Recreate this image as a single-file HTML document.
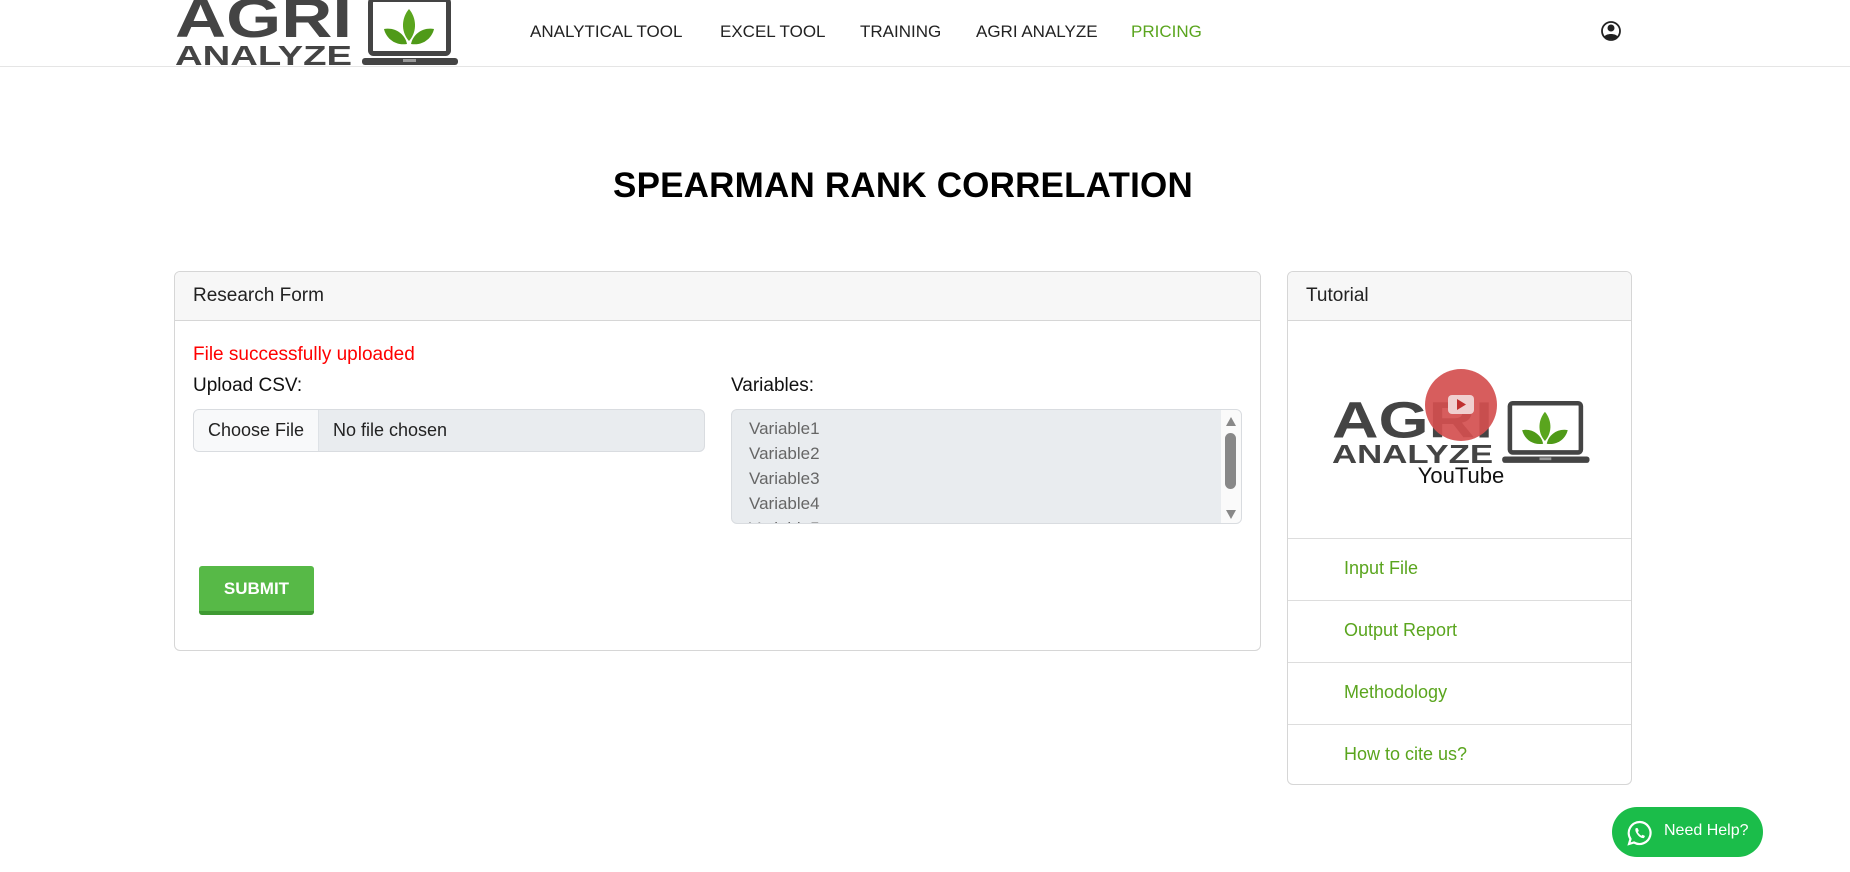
<!DOCTYPE html>
<html><head><meta charset="utf-8">
<style>
*{box-sizing:border-box;margin:0;padding:0}
body{width:1850px;height:872px;overflow:hidden;background:#fff;font-family:"Liberation Sans",sans-serif;color:#212529;position:relative}
.abs{position:absolute}
.hdr{position:absolute;left:0;top:0;width:1850px;height:67px;border-bottom:1px solid #e5e5e5}
.nav{position:absolute;top:22px;font-size:17px;color:#222;white-space:nowrap}
h1{position:absolute;left:0;width:1806px;text-align:center;top:166px;font-size:35px;font-weight:bold;color:#000;letter-spacing:0.2px}
.card{position:absolute;border:1px solid #d6d6d6;border-radius:6px;background:#fff;overflow:hidden}
.ch{height:49px;background:#f7f7f7;border-bottom:1px solid #d6d6d6;font-size:19px;padding:13px 0 0 18px;color:#222}
.lnk{position:absolute;left:0;width:100%;height:62px;border-top:1px solid #ddd;color:#5aa51e;font-size:18px;padding:19px 0 0 56px}
</style></head><body>
<div class="hdr"></div>
<div class="nav" style="left:530px">ANALYTICAL TOOL</div>
<div class="nav" style="left:720px">EXCEL TOOL</div>
<div class="nav" style="left:860px">TRAINING</div>
<div class="nav" style="left:976px">AGRI ANALYZE</div>
<div class="nav" style="left:1131px;color:#5aa51e">PRICING</div>
<h1>SPEARMAN RANK CORRELATION</h1>

<div class="card" style="left:174px;top:271px;width:1087px;height:380px">
  <div class="ch">Research Form</div>
  <div class="abs" style="left:18px;top:72px;font-size:19px;color:#f00">File successfully uploaded</div>
  <div class="abs" style="left:18px;top:103px;font-size:19px;color:#111">Upload CSV:</div>
  <div class="abs" style="left:556px;top:103px;font-size:19px;color:#111">Variables:</div>
  <div class="abs" style="left:18px;top:137px;width:512px;height:43px;border:1px solid #d9dce0;border-radius:6px;background:#e9ecef;overflow:hidden">
    <div class="abs" style="left:0;top:0;width:125px;height:41px;background:#f8f9fa;border-right:1px solid #dee2e6;font-size:18px;padding:10px 0 0 14px;color:#222">Choose File</div>
    <div class="abs" style="left:139px;top:10px;font-size:18px;color:#222">No file chosen</div>
  </div>
  <div class="abs" style="left:556px;top:137px;width:511px;height:115px;border:1px solid #d9dce0;border-radius:6px;background:#e9ecef;overflow:hidden;font-size:17px;color:#666;line-height:25px;padding:6px 0 0 17px">
    Variable1<br>Variable2<br>Variable3<br>Variable4<br>Variable5
    <div class="abs" style="right:0;top:0;width:20px;height:115px;background:#fafafa">
      <svg width="20" height="115"><path d="M5 16 L10 7 L15 16Z" fill="#888"/><rect x="4" y="23" width="11" height="56" rx="5.5" fill="#888"/><path d="M5 100 L10 109 L15 100Z" fill="#888"/></svg>
    </div>
  </div>
  <div class="abs" style="left:24px;top:294px;width:115px;height:49px;background:#57b947;border-radius:3px;border-bottom:4px solid #3f9a32;color:#fff;font-size:17px;font-weight:bold;text-align:center;padding-top:13px">SUBMIT</div>
</div>

<div class="card" style="left:1287px;top:271px;width:345px;height:514px">
  <div class="ch">Tutorial</div>
  <div class="lnk" style="top:266px">Input File</div>
  <div class="lnk" style="top:328px">Output Report</div>
  <div class="lnk" style="top:390px">Methodology</div>
  <div class="lnk" style="top:452px">How to cite us?</div>
</div>

<svg class="abs" style="left:0;top:0;z-index:5" width="1850" height="872">
  <defs>
    <g id="logo">
      <text x="0" y="40" font-family="Liberation Sans" font-weight="bold" font-size="56" fill="#444" textLength="177" lengthAdjust="spacingAndGlyphs">AGRI</text>
      <text x="0" y="68" font-family="Liberation Sans" font-weight="bold" font-size="28" fill="#444" textLength="177" lengthAdjust="spacingAndGlyphs">ANALYZE</text>
      <rect x="195.5" y="2.5" width="78" height="54" rx="3" fill="#fff" stroke="#444" stroke-width="5"/>
      <rect x="187" y="61" width="96" height="7" rx="3" fill="#444"/>
      <rect x="228" y="62" width="13" height="3" fill="#999"/>
      <path d="M234 44 C225 34 227 20 234 12 C241 20 243 34 234 44Z" fill="#5aa51e"/>
      <path d="M232 47 C220 49 211 41 209 32 C220 30 230 37 232 47Z" fill="#4f9a18"/>
      <path d="M236 47 C248 49 257 41 259 32 C248 30 238 37 236 47Z" fill="#4f9a18"/>
    </g>
  </defs>
  <g transform="translate(175,-3)"><use href="#logo"/></g>
  <g transform="translate(1332,401) scale(0.91)"><use href="#logo"/></g>
  <circle cx="1461" cy="405" r="36" fill="#d44f4f" fill-opacity="0.92"/>
  <rect x="1448" y="395" width="26" height="19" rx="4" fill="#f0d0d0"/>
  <path d="M1457 399 L1466 404.5 L1457 410Z" fill="#c03030"/>
  <text x="1461" y="483" text-anchor="middle" font-family="Liberation Sans" font-size="22" fill="#111">YouTube</text>
  <circle cx="1611" cy="31" r="9" fill="none" stroke="#222" stroke-width="1.8"/>
  <circle cx="1611" cy="28" r="3.5" fill="#222"/>
  <path d="M1604 37 C1606 33 1616 33 1618 37 C1615 40 1607 40 1604 37Z" fill="#222"/>
</svg>

<div class="abs" style="left:1612px;top:807px;width:151px;height:50px;border-radius:25px;background:#1bbd4a;color:#fff;font-size:16px">
  <svg class="abs" style="left:14px;top:12px" width="28" height="28" viewBox="0 0 28 28"><path d="M14 3 A11 11 0 1 1 8 23.5 L3 25 L4.5 20 A11 11 0 0 1 14 3Z" fill="none" stroke="#fff" stroke-width="2.2"/><path d="M10 9 C9 10 9 12 11 15 C13 18 16 19.5 18 19 L19 17 L16.5 15.8 L15.5 16.8 C14 16 12.5 14.5 11.8 13 L12.8 12 L11.8 9.3Z" fill="#fff"/></svg>
  <div class="abs" style="left:52px;top:15px">Need Help?</div>
</div>
</body></html>
